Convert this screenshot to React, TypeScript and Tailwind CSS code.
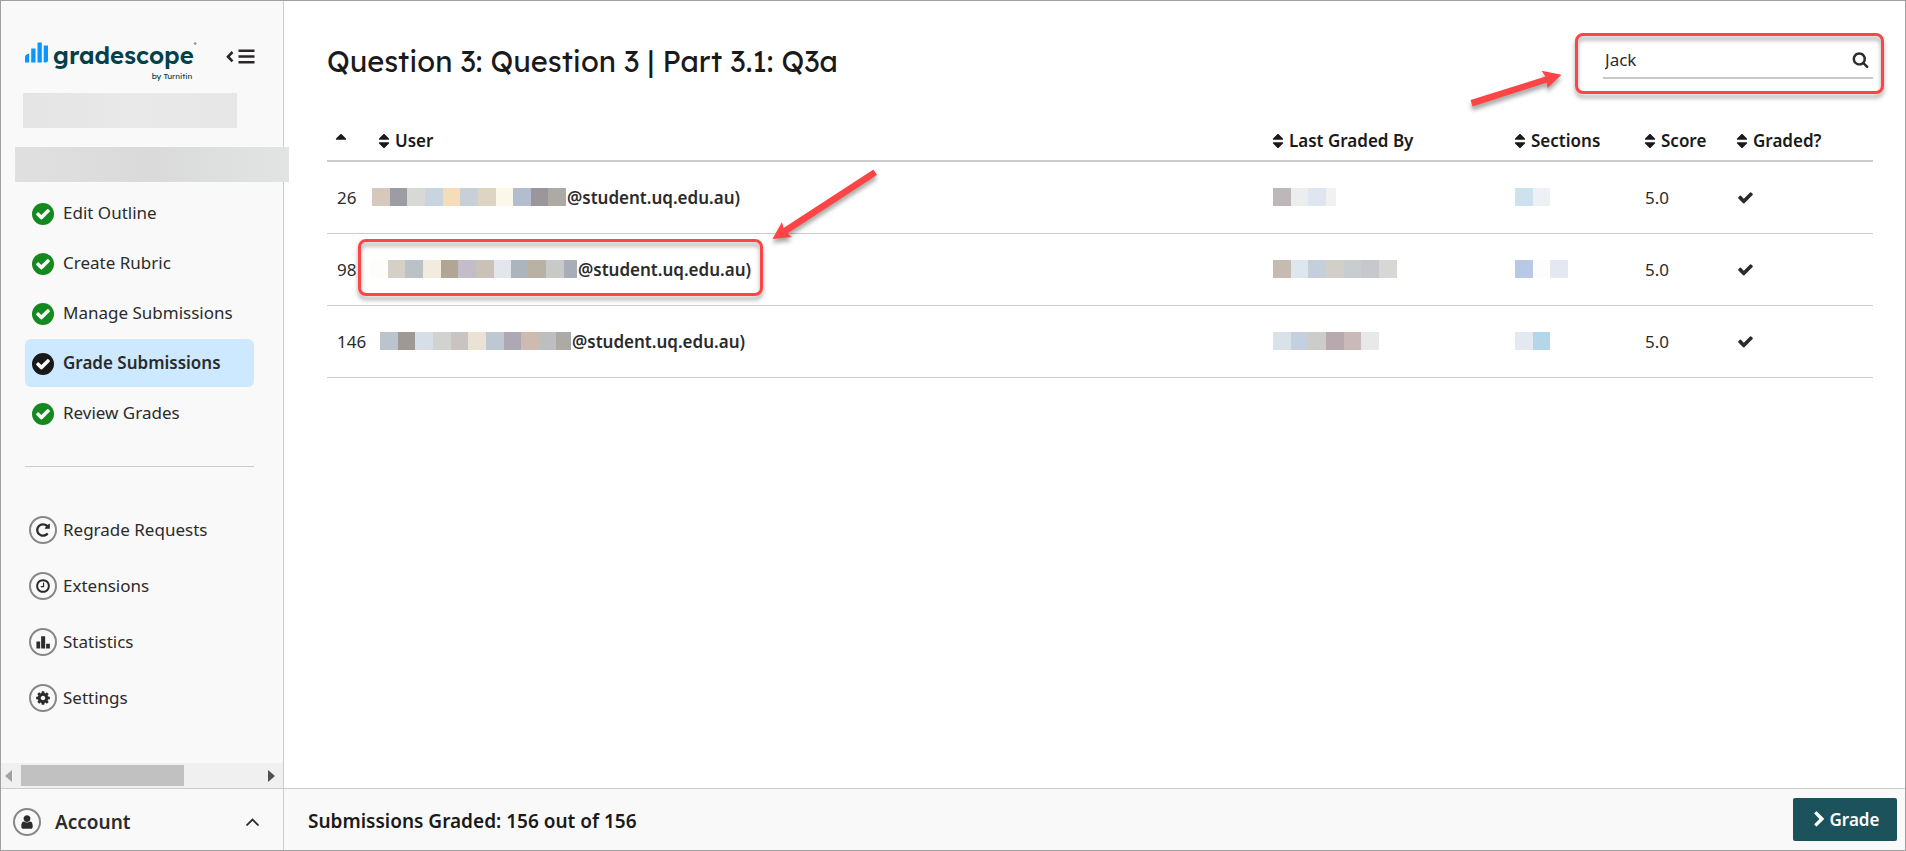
import { useState } from "react";
import type { ReactNode } from "react";

const ICONS = {
  check:
    "M1671 566q0 40-28 68l-724 724-136 136q-28 28-68 28t-68-28l-136-136-362-362q-28-28-28-68t28-68l136-136q28-28 68-28t68 28l294 295 656-657q28-28 68-28t68 28l136 136q28 28 28 68z",
  sort: "M1408 1088q0 26-19 45l-448 448q-19 19-45 19t-45-19l-448-448q-19-19-19-45t19-45 45-19h896q26 0 45 19t19 45zm0-384q0 26-19 45t-45 19h-896q-26 0-45-19t-19-45 19-45l448-448q19-19 45-19t45 19l448 448q19 19 19 45z",
  sortUp:
    "M1408 704q0 26-19 45t-45 19h-896q-26 0-45-19t-19-45 19-45l448-448q19-19 45-19t45 19l448 448q19 19 19 45z",
  search:
    "M1216 832q0-185-131.5-316.5t-316.5-131.5-316.5 131.5-131.5 316.5 131.5 316.5 316.5 131.5 316.5-131.5 131.5-316.5zm512 832q0 52-38 90t-90 38q-54 0-90-38l-343-342q-179 124-399 124-143 0-273.5-55.5t-225-150-150-225-55.5-273.5 55.5-273.5 150-225 225-150 273.5-55.5 273.5 55.5 225 150 150 225 55.5 273.5q0 220-124 399l343 343q37 37 37 90z",
  cog: "M1152 896q0-106-75-181t-181-75-181 75-75 181 75 181 181 75 181-75 75-181zm512-109v222q0 12-8 23t-20 13l-185 28q-19 54-39 91 35 50 107 138 10 12 10 25t-9 23q-27 37-99 108t-94 71q-12 0-26-9l-138-108q-44 23-91 38-16 136-29 186-7 28-36 28h-222q-14 0-24.5-8.5t-11.5-21.5l-28-184q-49-16-90-37l-141 107q-10 9-25 9-14 0-25-11-126-114-165-168-7-10-7-23 0-12 8-23 15-21 51-66.5t54-70.5q-27-50-41-99l-183-27q-13-2-21-12.5t-8-23.5v-222q0-12 8-23t19-13l186-28q14-46 39-92-40-57-107-138-10-12-10-24 0-10 9-23 26-36 98.5-107.5t94.5-71.5q13 0 26 10l138 107q44-23 91-38 16-136 29-186 7-28 36-28h222q14 0 24.5 8.5t11.5 21.5l28 184q49 16 90 37l142-107q9-9 24-9 13 0 25 10 129 119 165 170 7 8 7 22 0 12-8 23-15 21-51 66.5t-54 70.5q26 50 41 98l183 28q13 2 21 12.5t8 23.5z",
  repeat:
    "M1664 256v448q0 26-19 45t-45 19h-448q-42 0-59-40-17-39 14-69l138-138q-148-137-349-137-104 0-198.5 40.5t-163.5 109.5-109.5 163.5-40.5 198.5 40.5 198.5 109.5 163.5 163.5 109.5 198.5 40.5q119 0 225-52t179-147q7-10 23-12 15 0 25 9l137 138q9 8 9.5 20.5t-7.5 22.5q-109 132-264 204.5t-327 72.5q-156 0-298-61t-245-164-164-245-61-298 61-298 164-245 245-164 298-61q147 0 284.5 55.5t244.5 156.5l130-129q29-31 70-14 39 17 39 59z",
  clock:
    "M1024 544v448q0 14-9 23t-23 9h-320q-14 0-23-9t-9-23v-64q0-14 9-23t23-9h224v-352q0-14 9-23t23-9h64q14 0 23 9t9 23zm416 352q0-148-73-273t-198-198-273-73-273 73-198 198-73 273 73 273 198 198 273 73 273-73 198-198 73-273zm224 0q0 209-103 385.5t-279.5 279.5-385.5 103-385.5-103-279.5-279.5-103-385.5 103-385.5 279.5-279.5 385.5-103 385.5 103 279.5 279.5 103 385.5z",
  chart: "M160 832h416v800h-416zM688 256h448v1376h-448zM1248 1088h416v544h-416z",
  chevronRight:
    "M1363 877l-742 742q-19 19-45 19t-45-19l-166-166q-19-19-19-45t19-45l531-531-531-531q-19-19-19-45t19-45l166-166q19-19 45-19t45 19l742 742q19 19 19 45t-19 45z",
  user: "M1536 1399q0 109-62.5 187t-150.5 78h-854q-88 0-150.5-78t-62.5-187q0-85 8.5-160.5t31.5-152 58.5-131 94-89 134.5-34.5q131 128 313 128t313-128q76 0 134.5 34.5t94 89 58.5 131 31.5 152 8.5 160.5zm-256-887q0 159-112.5 271.5t-271.5 112.5-271.5-112.5-112.5-271.5 112.5-271.5 271.5-112.5 271.5 112.5 112.5 271.5z",
};

type IconName = keyof typeof ICONS;

function Icon({ name, className }: { name: IconName; className: string }) {
  return (
    <svg viewBox="0 0 1792 1792" fill="currentColor" aria-hidden="true" className={`shrink-0 ${className}`}>
      <path d={ICONS[name]} />
    </svg>
  );
}

const steps = [
  { label: "Edit Outline", active: false },
  { label: "Create Rubric", active: false },
  { label: "Manage Submissions", active: false },
  { label: "Grade Submissions", active: true },
  { label: "Review Grades", active: false },
];

const tools: { label: string; icon: IconName }[] = [
  { label: "Regrade Requests", icon: "repeat" },
  { label: "Extensions", icon: "clock" },
  { label: "Statistics", icon: "chart" },
  { label: "Settings", icon: "cog" },
];

interface Submission {
  id: number;
  highlighted: boolean;
  indent: string;
  name: string[];
  grader: string[];
  sections: string[];
  score: string;
}

const submissions: Submission[] = [
  {
    id: 26,
    highlighted: false,
    indent: "pl-1",
    name: [
      "w-[18px] bg-[#d6c8bc]", "w-[17px] bg-[#9c9ca5]", "w-[18px] bg-[#d8d9d6]", "w-[18px] bg-[#c8d4de]",
      "w-[17px] bg-[#f6ddb9]", "w-[18px] bg-[#c7cfd7]", "w-[18px] bg-[#ddd4c3]", "w-[17px] bg-[#fbf8ea]",
      "w-[18px] bg-[#b2becd]", "w-[17px] bg-[#9b959c]", "w-[18px] bg-[#adaaa6]",
    ],
    grader: ["w-[18px] bg-[#bdb7b7]", "w-[17px] bg-[#ecedef]", "w-[18px] bg-[#dfe6f1]", "w-[10px] bg-[#f1f1f2]"],
    sections: ["w-[18px] bg-[#cce2ee]", "w-[17px] bg-[#edf1f6]"],
    score: "5.0",
  },
  {
    id: 98,
    highlighted: true,
    indent: "pl-0.5",
    name: [
      "w-[18px] bg-[#fdfdfb]", "w-[17px] bg-[#d6cfc6]", "w-[18px] bg-[#bbc2c6]", "w-[18px] bg-[#f1ecdd]",
      "w-[17px] bg-[#b1a594]", "w-[18px] bg-[#c3bcca]", "w-[18px] bg-[#cac2b6]", "w-[17px] bg-[#e3e6ec]",
      "w-[17px] bg-[#adb5bc]", "w-[18px] bg-[#bab1a5]", "w-[18px] bg-[#c8cac8]", "w-[13px] bg-[#a9adb7]",
    ],
    grader: [
      "w-[18px] bg-[#c6bbb1]", "w-[17px] bg-[#dee7ee]", "w-[18px] bg-[#c3d0dc]", "w-[18px] bg-[#d2cfc8]",
      "w-[17px] bg-[#c8cdd0]", "w-[18px] bg-[#c6c8cd]", "w-[18px] bg-[#d8d7d3]",
    ],
    sections: ["w-[18px] bg-[#b8c9e5]", "w-[17px] bg-[#fdfdfd]", "w-[18px] bg-[#e3e8f1]"],
    score: "5.0",
  },
  {
    id: 146,
    highlighted: false,
    indent: "pl-3",
    name: [
      "w-[18px] bg-[#bbc4cc]", "w-[17px] bg-[#9f9995]", "w-[18px] bg-[#d6dfe7]", "w-[18px] bg-[#d0d3d0]",
      "w-[17px] bg-[#c9c3c1]", "w-[18px] bg-[#eae2d5]", "w-[18px] bg-[#bdc8d2]", "w-[17px] bg-[#aea8b5]",
      "w-[18px] bg-[#cdbbaf]", "w-[17px] bg-[#bcbebf]", "w-[15px] bg-[#adaaa6]",
    ],
    grader: [
      "w-[18px] bg-[#d9e2e8]", "w-[17px] bg-[#c3d0df]", "w-[18px] bg-[#cccdca]", "w-[18px] bg-[#b7a9ad]",
      "w-[17px] bg-[#cab9b9]", "w-[18px] bg-[#e8e8e8]",
    ],
    sections: ["w-[18px] bg-[#e4e8f0]", "w-[17px] bg-[#b3d7e9]"],
    score: "5.0",
  },
];

// pixelated strip that hides personal details
function Redacted({ blocks }: { blocks: string[] }) {
  return (
    <span className="flex h-[18px]" aria-label="Redacted">
      {blocks.map((block, i) => (
        <span key={i} className={block} />
      ))}
    </span>
  );
}

function Highlight({ className, children }: { className: string; children?: ReactNode }) {
  return (
    <div
      className={`pointer-events-none absolute rounded-lg border-3 border-[#fd4545] drop-shadow-[0_4px_2px_rgba(0,0,0,0.35)] ${className}`}
    >
      {children}
    </div>
  );
}

function RingIcon({ name }: { name: IconName }) {
  return (
    <span className="flex size-7 shrink-0 items-center justify-center rounded-full border-2 border-[#878787] text-[#2b2b2b]">
      <Icon name={name} className="size-4" />
    </span>
  );
}

function Logo() {
  return (
    <a href="#home" aria-label="Gradescope by Turnitin" className="flex items-start gap-1 pt-px text-[#04404a]">
      <svg width="24" height="21" viewBox="0 0 24 21" aria-hidden="true" fill="#0a96ff">
        <path d="M0 20.500v-5.500q0-2.500 4.200-3.500v9zM6.200 6.500h4.300v14h-4.300zM12.500 .5h4.300v20h-4.300zM18.700 3.500h4.300v14.500q0 2.500-2.700 2.500h-1.600z" />
      </svg>
      <span className="flex flex-col items-end font-[Lexend,Lato,sans-serif]">
        <span className="flex items-start">
          <span className="text-2xl leading-[26px] font-semibold">gradescope</span>
          <span className="text-[5px] leading-1">®</span>
        </span>
        <span className="pr-1 text-[8px] leading-4">by Turnitin</span>
      </span>
    </a>
  );
}

function Sidebar() {
  return (
    <aside className="flex w-[283px] shrink-0 flex-col border-r border-[#cccccc] bg-[#f9f9f9]">
      <div className="flex h-[81px] items-start justify-between pt-10 pr-7 pl-6">
        <Logo />
        <button type="button" aria-label="Collapse sidebar" className="mt-2 text-[#2b2627]">
          <svg width="29" height="15" viewBox="0 0 29 15" fill="none" stroke="currentColor" strokeWidth="2.600" aria-hidden="true">
            <path d="M6.500 3L2 7.700l4.500 4.700" />
            <path d="M12.500 1.800h16M12.500 7.500h16M12.500 13.200h16" />
          </svg>
        </button>
      </div>
      <div className="mt-[11px] ml-[22px] h-[35px] w-[214px] bg-linear-to-r from-[#e4e4e4] via-[#e9e9e9] to-[#e7e7e7]" />
      <div className="relative z-10 mt-[19px] ml-[14px] h-[35px] w-[274px] bg-linear-to-r from-[#e0e0e0] via-[#dadada] to-[#e2e4e4]" />

      <nav aria-label="Assignment" className="px-6 pt-[7px]">
        <ul className="flex flex-col gap-0.5">
          {steps.map((step) => (
            <li key={step.label}>
              <a
                href="#step"
                aria-current={step.active ? "page" : undefined}
                className={`flex h-12 w-[229px] items-center gap-[9px] rounded-md pb-0.5 pl-[7px] ${
                  step.active ? "bg-[#cce9ff] font-semibold" : ""
                }`}
              >
                <span
                  className={`mt-1 flex size-[22px] items-center justify-center rounded-full text-white ${
                    step.active ? "bg-[#191919]" : "bg-[#14891f]"
                  }`}
                >
                  <Icon name="check" className="size-4" />
                </span>
                {step.label}
              </a>
            </li>
          ))}
        </ul>
        <hr className="mt-[29px] w-[229px] border-[#cccccc]" />
        <ul className="mt-[39px] flex flex-col gap-2">
          {tools.map((tool) => (
            <li key={tool.label}>
              <a href="#tool" className="flex h-12 items-center gap-1.5 pl-1">
                <RingIcon name={tool.icon} />
                <span className="pb-0.5">{tool.label}</span>
              </a>
            </li>
          ))}
        </ul>
      </nav>

      {/* horizontal scroll track */}
      <div className="mt-auto flex h-[25px] items-center bg-[#f0f0f0] px-1">
        <svg width="7" height="12" viewBox="0 0 7 12" aria-hidden="true" fill="#a3a3a3">
          <path d="M7 0v12L0 6z" />
        </svg>
        <span className="ml-[9px] h-[21px] w-[163px] bg-[#c1c1c1]" />
        <svg width="7" height="12" viewBox="0 0 7 12" aria-hidden="true" fill="#505050" className="mr-1 ml-auto">
          <path d="M0 0v12l7-6z" />
        </svg>
      </div>
    </aside>
  );
}

function SortHeader({ label, className }: { label: string; className: string }) {
  return (
    <th scope="col" className={`p-0 text-left font-semibold ${className}`}>
      <button type="button" className="flex items-center gap-0.5">
        <Icon name="sort" className="size-[18px]" />
        {label}
      </button>
    </th>
  );
}

export default function App() {
  const [query, setQuery] = useState("Jack");

  return (
    <div className="flex min-h-screen flex-col border border-[#a0a0a0] bg-white font-['Noto_Sans',sans-serif] text-[17px] leading-[25px] text-[#2b2b2b]">
      <div className="flex grow">
        <Sidebar />
        <main className="grow pr-8 pl-[43px]">
          <header className="flex items-start justify-between">
            <h1 className="pt-10 font-[Lexend,Lato,sans-serif] text-[29px] leading-10 text-[#1a1a1a]">
              Question 3: Question 3 | Part 3.1: Q3a
            </h1>
            <form role="search" className="relative mt-10 w-[270px]" onSubmit={(e) => e.preventDefault()}>
              <div className="flex h-[38px] items-center border-b-2 border-[#c8c8c8] pr-1 pl-0.5">
                <input
                  type="text"
                  aria-label="Search users"
                  value={query}
                  onChange={(e) => setQuery(e.target.value)}
                  className="w-full grow bg-transparent outline-none"
                />
                <button type="submit" aria-label="Search">
                  <Icon name="search" className="size-[17px]" />
                </button>
              </div>
              <Highlight className="-top-2 -right-[11px] -bottom-[15px] -left-7">
                <svg width="92" height="38" viewBox="0 0 92 38" className="absolute top-[34px] right-full mr-4" aria-hidden="true">
                  <path fill="#fd4545" d="M.5 30L2.500 36.500 77 12.500 77.500 18 91.500 4.800 71.500 .8 75.500 6.500z" />
                </svg>
              </Highlight>
            </form>
          </header>

          <table className="mt-10 w-full table-fixed border-collapse">
            <thead>
              <tr className="h-10 border-b-2 border-[#cccccc] text-[#1a1a1a]">
                <th scope="col" aria-sort="ascending" className="w-[41px] p-0 pl-[5px]">
                  <button type="button" aria-label="Sort by number" className="flex">
                    <Icon name="sortUp" className="size-[18px]" />
                  </button>
                </th>
                <SortHeader label="User" className="pl-[7px]" />
                <SortHeader label="Last Graded By" className="w-[242px]" />
                <SortHeader label="Sections" className="w-[130px]" />
                <SortHeader label="Score" className="w-[92px]" />
                <SortHeader label="Graded?" className="w-[140px]" />
              </tr>
            </thead>
            <tbody>
              {submissions.map((row) => (
                <tr key={row.id} className="h-18 border-b border-[#cccccc]">
                  <td className="p-0 pl-2.5">{row.id}</td>
                  <td className={`p-0 font-semibold ${row.indent}`}>
                    <div className="relative flex w-fit items-center gap-px">
                      <Redacted blocks={row.name} />
                      @student.uq.edu.au)
                      {row.highlighted && (
                        <Highlight className="-inset-x-3 -top-[18px] -bottom-3.5">
                          <svg width="106" height="71" viewBox="0 0 106 71" className="absolute bottom-full left-full mb-0.5 ml-3" aria-hidden="true">
                            <path fill="#fd4545" d="M101.500 .5L105 6 15.300 64.500 20 68 .5 70 10 53 11.500 59z" />
                          </svg>
                        </Highlight>
                      )}
                    </div>
                  </td>
                  <td className="p-0 pl-1">
                    <Redacted blocks={row.grader} />
                  </td>
                  <td className="p-0 pl-1">
                    <Redacted blocks={row.sections} />
                  </td>
                  <td className="p-0 pl-1">{row.score}</td>
                  <td className="p-0 pl-1">
                    <Icon name="check" className="size-[17px]" />
                  </td>
                </tr>
              ))}
            </tbody>
          </table>
        </main>
      </div>

      <footer className="flex h-[62px] shrink-0 border-t border-[#cccccc] bg-[#f9f9f9]">
        <button
          type="button"
          className="flex w-[283px] shrink-0 items-center border-r border-[#cccccc] pt-1 pr-6 pl-3 text-[19px] font-semibold"
        >
          <RingIcon name="user" />
          <span className="ml-[14px] pt-0.5">Account</span>
          <svg width="13" height="8" viewBox="0 0 13 8" fill="none" stroke="currentColor" strokeWidth="1.800" className="ml-auto" aria-hidden="true">
            <path d="M.5 7.500l6-6 6 6" />
          </svg>
        </button>
        <div className="flex grow items-center justify-between pr-2 pl-6">
          <p className="pt-1 text-[19px] font-semibold text-[#1a1a1a]">Submissions Graded: 156 out of 156</p>
          <button
            type="button"
            className="flex h-[43px] w-[104px] items-center justify-center gap-0.5 rounded-xs bg-[#1b525b] font-semibold text-white"
          >
            <Icon name="chevronRight" className="size-[17px]" />
            Grade
          </button>
        </div>
      </footer>
    </div>
  );
}
